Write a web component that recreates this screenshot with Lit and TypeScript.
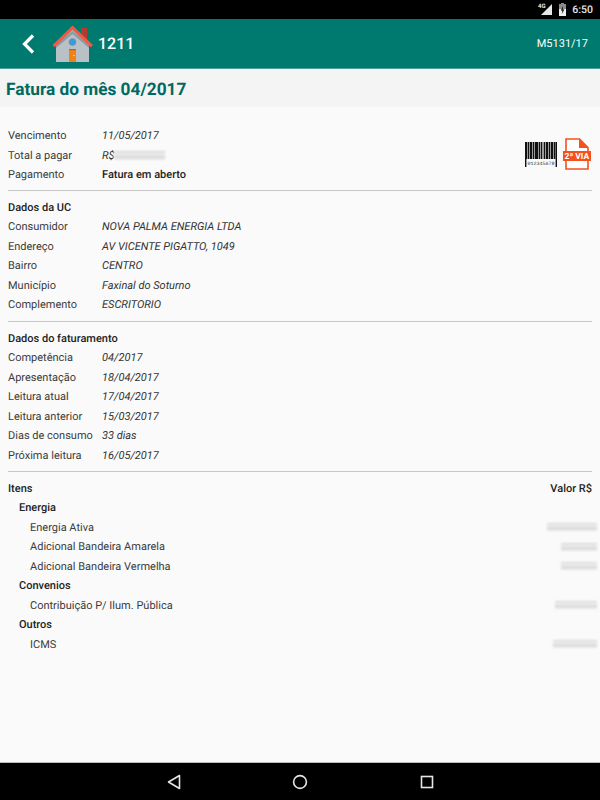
import { LitElement, html, css, svg } from "lit";
import { customElement } from "lit/decorators.js";

type Row = { label: string; value?: string; bold?: boolean; blur?: number };

const head: Row[] = [
  { label: "Vencimento", value: "11/05/2017" },
  { label: "Total a pagar", value: "R$", blur: 51 },
  { label: "Pagamento", value: "Fatura em aberto", bold: true },
];
const uc: Row[] = [
  { label: "Consumidor", value: "NOVA PALMA ENERGIA LTDA" },
  { label: "Endereço", value: "AV VICENTE PIGATTO, 1049" },
  { label: "Bairro", value: "CENTRO" },
  { label: "Município", value: "Faxinal do Soturno" },
  { label: "Complemento", value: "ESCRITORIO" },
];
const billing: Row[] = [
  { label: "Competência", value: "04/2017" },
  { label: "Apresentação", value: "18/04/2017" },
  { label: "Leitura atual", value: "17/04/2017" },
  { label: "Leitura anterior", value: "15/03/2017" },
  { label: "Dias de consumo", value: "33 dias" },
  { label: "Próxima leitura", value: "16/05/2017" },
];
const items: { group: string; rows: { name: string; w: number }[] }[] = [
  {
    group: "Energia",
    rows: [
      { name: "Energia Ativa", w: 50 },
      { name: "Adicional Bandeira Amarela", w: 36 },
      { name: "Adicional Bandeira Vermelha", w: 36 },
    ],
  },
  { group: "Convenios", rows: [{ name: "Contribuição P/ Ilum. Pública", w: 42 }] },
  { group: "Outros", rows: [{ name: "ICMS", w: 44 }] },
];
// alternating black / grey strips of the barcode, widths add up to 30
const bars = [1, 1, 1, 1, 2, 1, 1, 1, 3, 1, 1, 1, 1, 2, 1, 1, 2, 1, 1, 1, 2, 1, 1, 1];

@customElement("app-root")
export class AppRoot extends LitElement {
  static styles = css`
    :host {
      display: flex;
      flex-direction: column;
      width: 600px;
      height: 800px;
      background: #fafafa;
      font-family: Roboto, "Liberation Sans", sans-serif;
      font-size: 11px;
      color: #333;
      overflow: hidden;
      text-rendering: geometricPrecision;
    }
    .status {
      height: 19px;
      background: #000;
      display: flex;
      justify-content: flex-end;
      align-items: center;
      gap: 5px;
      padding-right: 7px;
      color: #e8e8e8;
      font-size: 10.5px;
      font-weight: 500;
    }
    .status svg { display: block; }
    .bar {
      height: 49px;
      background: #00796f;
      display: flex;
      align-items: center;
      color: #fff;
      padding: 0 8px 0 21px;
      border-bottom: 1px solid #4d9f98;
      box-sizing: content-box;
    }
    .back { margin-right: 17px; display: block; }
    .house { margin-right: 4px; display: block; }
    .num { font-size: 16px; font-weight: 500; flex: 1; }
    .code { font-size: 11px; padding-right: 4px; }
    .title {
      height: 38px;
      box-sizing: border-box;
      background: #f4f4f4;
      display: flex;
      align-items: center;
      padding: 3px 0 0 6px;
      color: #00695f;
      font-size: 17.25px;
      font-weight: 700;
    }
    .content {
      flex: 1;
      padding: 19px 8px 0;
    }
    .row {
      height: 19.5px;
      display: flex;
      align-items: center;
      white-space: nowrap;
    }
    .label { width: 94px; color: #3c3c3c; }
    .value { font-style: italic; color: #333; display: flex; align-items: center; }
    .value.bold { font-style: normal; font-weight: 500; color: #222; }
    .heading { font-weight: 500; color: #222; }
    .spread { justify-content: space-between; }
    .group { padding-left: 11px; font-weight: 500; color: #222; }
    .item { padding-left: 22px; color: #3c3c3c; justify-content: space-between; }
    .sep { height: 1px; background: #c8c8c8; margin: 6.5px 0; }
    .sep.tight { margin-top: 6px; }
    .top {
      display: flex;
      justify-content: space-between;
      align-items: flex-start;
      height: 58px;
      margin-bottom: -0.5px;
    }
    .icons { display: flex; align-items: center; gap: 6px; padding: 12px 1px 0 0; }
    .icons svg { display: block; }
    .smudge {
      display: block;
      height: 8px;
      margin-right: -5px;
      background:
        linear-gradient(#d2d2d2, #f2f2f2 35%, #d6d6d6 65%, #efefef),
        #ddd;
      filter: blur(1px);
    }
    .value .smudge { height: 9px; margin-left: -1px; }
    .nav {
      height: 37px;
      background: #000;
      border-top: 1px solid #bdbdbd;
      display: flex;
      justify-content: center;
      align-items: center;
      gap: 111.5px;
    }
    .nav svg { display: block; }
    .viaText { font: 700 8.5px Roboto, "Liberation Sans", sans-serif; }
    .barText { font: 5px "Liberation Mono", monospace; }
  `;

  private renderRow(r: Row) {
    return html`<div class="row">
      <span class="label">${r.label}</span>
      <span class="value ${r.bold ? "bold" : ""}">
        ${r.value}
        ${r.blur ? html`<span class="smudge" style="width:${r.blur}px"></span>` : ""}
      </span>
    </div>`;
  }

  private renderBarcode() {
    let x = 1;
    const rects = bars.map((w, i) => {
      const fill = i % 2 === 0 ? "#111" : "#9a9a9a";
      const r = svg`<rect x=${x} y="0" width=${w} height="17" fill=${fill} />`;
      x += w;
      return r;
    });
    return html`<svg width="32" height="25" viewBox="0 0 32 25">
      ${rects}
      <rect x="0" y="0" width="1.4" height="25" fill="#111" />
      <rect x="30.6" y="0" width="1.4" height="25" fill="#111" />
      <text class="barText" x="2.5" y="23" fill="#333" textLength="27">012345678</text>
    </svg>`;
  }

  render() {
    return html`
      <div class="status">
        <svg width="15" height="13" viewBox="0 0 15 13">
          <path d="M14 1v11H3z" fill="#e8e8e8" />
          <text x="0" y="5" font-size="6" font-weight="700" fill="#e8e8e8">4G</text>
        </svg>
        <svg width="9" height="13" viewBox="0 0 9 13">
          <path d="M3 0h3v1h2v12H1V1h2z" fill="#8a8a8a" />
          <path d="M1 6h7v7H1z" fill="#efefef" />
          <path d="M5 3 2.8 7.5h1.6L3.8 11 6.4 6.6H4.8z" fill="#111" />
        </svg>
        <span>6:50</span>
      </div>

      <div class="bar">
        <svg class="back" width="14" height="20" viewBox="0 0 14 20">
          <path d="M12 1.5 3.5 10l8.5 8.5" fill="none" stroke="#fff" stroke-width="3.2" />
        </svg>
        <svg class="house" width="42" height="37" viewBox="0 0 42 37">
          <rect x="29" y="3" width="6" height="13" fill="#b23b2c" />
          <path d="M4 19 20.5 4 37 19v18H4z" fill="#b9c0c6" />
          <path d="M4 20 20.5 6 37 20v3L20.5 9 4 23z" fill="#8d9aa1" />
          <path d="M0.5 20 20.5 0.5 41 20l-2.2 2.2L20.5 5 2.7 22.2z" fill="#ef5a47" />
          <circle cx="20.5" cy="17" r="3.6" fill="#3f97dc" stroke="#8a9aa3" stroke-width="0.6" />
          <rect x="17" y="24" width="7" height="13" fill="#ee8419" />
          <rect x="17" y="24" width="7" height="1.2" fill="#b9611a" />
          <rect x="21" y="30" width="2" height="1" fill="#ffd54f" />
        </svg>
        <span class="num">1211</span>
        <span class="code">M5131/17</span>
      </div>

      <div class="title">Fatura do mês 04/2017</div>

      <div class="content">
        <div class="top">
          <div>${head.map((r) => this.renderRow(r))}</div>
          <div class="icons">
            ${this.renderBarcode()}
            <svg width="28" height="32" viewBox="0 0 28 32">
              <path d="M3 1h13.5L25 9.5V31H3z" fill="#fff" stroke="#f4511e" stroke-width="1.6" />
              <path d="M16 1v9h9z" fill="#f4511e" />
              <rect x="0" y="13" width="28" height="10" fill="#f4511e" />
              <text class="viaText" x="1.5" y="21.2" fill="#fff">2ª VIA</text>
            </svg>
          </div>
        </div>
        <div class="sep"></div>

        <div class="row heading">Dados da UC</div>
        ${uc.map((r) => this.renderRow(r))}
        <div class="sep"></div>

        <div class="row heading">Dados do faturamento</div>
        ${billing.map((r) => this.renderRow(r))}
        <div class="sep tight"></div>

        <div class="row heading spread"><span>Itens</span><span>Valor R$</span></div>
        ${items.map(
          (g) => html`
            <div class="row group">${g.group}</div>
            ${g.rows.map(
              (r) => html`<div class="row item">
                <span>${r.name}</span>
                <span class="smudge" style="width:${r.w}px"></span>
              </div>`
            )}
          `
        )}
      </div>

      <div class="nav">
        <svg width="14" height="16" viewBox="0 0 14 16">
          <path d="M12.5 1.5v13L1.5 8z" fill="none" stroke="#e6e6e6" stroke-width="1.6" stroke-linejoin="round" />
        </svg>
        <svg width="16" height="16" viewBox="0 0 16 16">
          <circle cx="8" cy="8" r="6.4" fill="none" stroke="#e6e6e6" stroke-width="1.6" />
        </svg>
        <svg width="14" height="14" viewBox="0 0 14 14">
          <rect x="1.5" y="1.5" width="11" height="11" fill="none" stroke="#e6e6e6" stroke-width="1.6" />
        </svg>
      </div>
    `;
  }
}
